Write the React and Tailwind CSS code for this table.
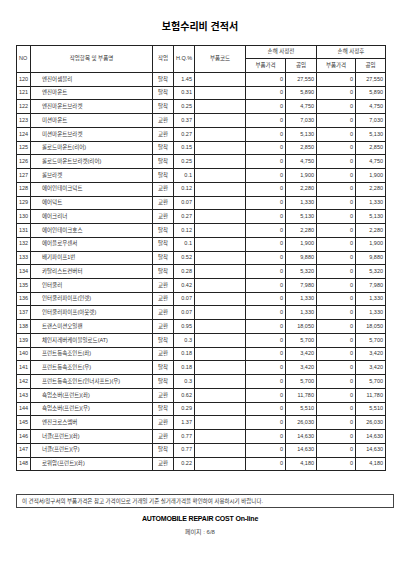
import React from "react";

const rows = [
  [120, "엔진어셈블리", "탈착", "1.45", "27,550"],
  [121, "엔진마운트", "탈착", "0.31", "5,890"],
  [122, "엔진마운트브라켓", "탈착", "0.25", "4,750"],
  [123, "미션마운트", "교환", "0.37", "7,030"],
  [124, "미션마운트브라켓", "교환", "0.27", "5,130"],
  [125, "롤로드마운트(리어)", "탈착", "0.15", "2,850"],
  [126, "롤로드마운트브라켓(리어)", "탈착", "0.25", "4,750"],
  [127, "롤브라켓", "탈착", "0.1", "1,900"],
  [128, "에어인테이크덕트", "교환", "0.12", "2,280"],
  [129, "에어덕트", "교환", "0.07", "1,330"],
  [130, "에어크리너", "교환", "0.27", "5,130"],
  [131, "에어인테이크호스", "탈착", "0.12", "2,280"],
  [132, "에어플로우센서", "탈착", "0.1", "1,900"],
  [133, "배기파이프1번", "탈착", "0.52", "9,880"],
  [134, "카탈리스트컨버터", "탈착", "0.28", "5,320"],
  [135, "인터쿨러", "교환", "0.42", "7,980"],
  [136, "인터쿨러파이프(인렛)", "교환", "0.07", "1,330"],
  [137, "인터쿨러파이프(아웃렛)", "교환", "0.07", "1,330"],
  [138, "트랜스미션오일팬", "교환", "0.95", "18,050"],
  [139, "체인지레버케이블일로드(AT)", "탈착", "0.3", "5,700"],
  [140, "프런트등속조인트(좌)", "교환", "0.18", "3,420"],
  [141, "프런트등속조인트(우)", "탈착", "0.18", "3,420"],
  [142, "프런트등속조인트(인너샤프트)(우)", "탈착", "0.3", "5,700"],
  [143, "쇽업소버(프런트)(좌)", "교환", "0.62", "11,780"],
  [144, "쇽업소버(프런트)(우)", "탈착", "0.29", "5,510"],
  [145, "엔진크로스멤버", "교환", "1.37", "26,030"],
  [146, "너클(프런트)(좌)", "교환", "0.77", "14,630"],
  [147, "너클(프런트)(우)", "탈착", "0.77", "14,630"],
  [148, "로워암(프런트)(좌)", "교환", "0.22", "4,180"],
];

const font = { fontFamily: '"Liberation Sans", "Noto Sans CJK KR", sans-serif' };

export default function App() {
  const td = "border border-[#222] px-[2px] leading-none";
  return (
    <div className="w-[400px] h-[563px] bg-white text-[#333] overflow-hidden" style={font}>
      <div className="pt-[21px] text-center text-[10px] font-bold text-black leading-[12px]">보험수리비 견적서</div>
      <div className="pt-[12px] pl-[16px]">
        <table className="border-collapse table-fixed w-[369px] text-[5.5px] border-[1.5px] border-[#111]">
          <colgroup>
            <col className="w-[14px]" />
            <col className="w-[122px]" />
            <col className="w-[21px]" />
            <col className="w-[21px]" />
            <col className="w-[51px]" />
            <col className="w-[40px]" />
            <col className="w-[31px]" />
            <col className="w-[39px]" />
            <col className="w-[30px]" />
          </colgroup>
          <thead>
            <tr className="h-[13px]">
              <td rowSpan={2} className={`${td} text-left`}>NO</td>
              <td rowSpan={2} className={`${td} text-center`}>작업항목 및 부품명</td>
              <td rowSpan={2} className={`${td} text-center`}>작업</td>
              <td rowSpan={2} className={`${td} text-center`}>H.Q.%</td>
              <td rowSpan={2} className={`${td} text-center`}>부품코드</td>
              <td colSpan={2} className={`${td} text-center border-l-[1.5px] border-l-[#111]`}>손해 사정전</td>
              <td colSpan={2} className={`${td} text-center border-l-[1.5px] border-l-[#111]`}>손해 사정후</td>
            </tr>
            <tr className="h-[14px]">
              <td className={`${td} text-center border-l-[1.5px] border-l-[#111]`}>부품가격</td>
              <td className={`${td} text-center`}>공임</td>
              <td className={`${td} text-center border-l-[1.5px] border-l-[#111]`}>부품가격</td>
              <td className={`${td} text-center`}>공임</td>
            </tr>
          </thead>
          <tbody>
            {rows.map(([no, name, work, hq, cost]) => (
              <tr key={no} className="h-[13.74px]">
                <td className={`${td} text-left`}>{no}</td>
                <td className={`${td} text-left pl-[11px] whitespace-nowrap overflow-hidden`}>{name}</td>
                <td className={`${td} text-center`}>{work}</td>
                <td className={`${td} text-right`}>{hq}</td>
                <td className={`${td}`}></td>
                <td className={`${td} text-right border-l-[1.5px] border-l-[#111]`}>0</td>
                <td className={`${td} text-right`}>{cost}</td>
                <td className={`${td} text-right border-l-[1.5px] border-l-[#111]`}>0</td>
                <td className={`${td} text-right`}>{cost}</td>
              </tr>
            ))}
          </tbody>
        </table>
      </div>
      <div className="mt-[23px] ml-[16px] w-[378px] h-[14px] border border-[#444] flex items-center pl-[5px] text-[5.5px] leading-none whitespace-nowrap">
        이 견적서/청구서의 부품가격은 참고 가격이므로 거래일 기준 실거래가격을 확인하여 사용하시기 바랍니다.
      </div>
      <div className="mt-[7px] text-center text-[7px] font-bold text-black leading-[8px] tracking-[-0.2px]">AUTOMOBILE REPAIR COST On-line</div>
      <div className="mt-[5px] text-center text-[6px] leading-[8px] text-[#444]">페이지 : 6/8</div>
    </div>
  );
}
